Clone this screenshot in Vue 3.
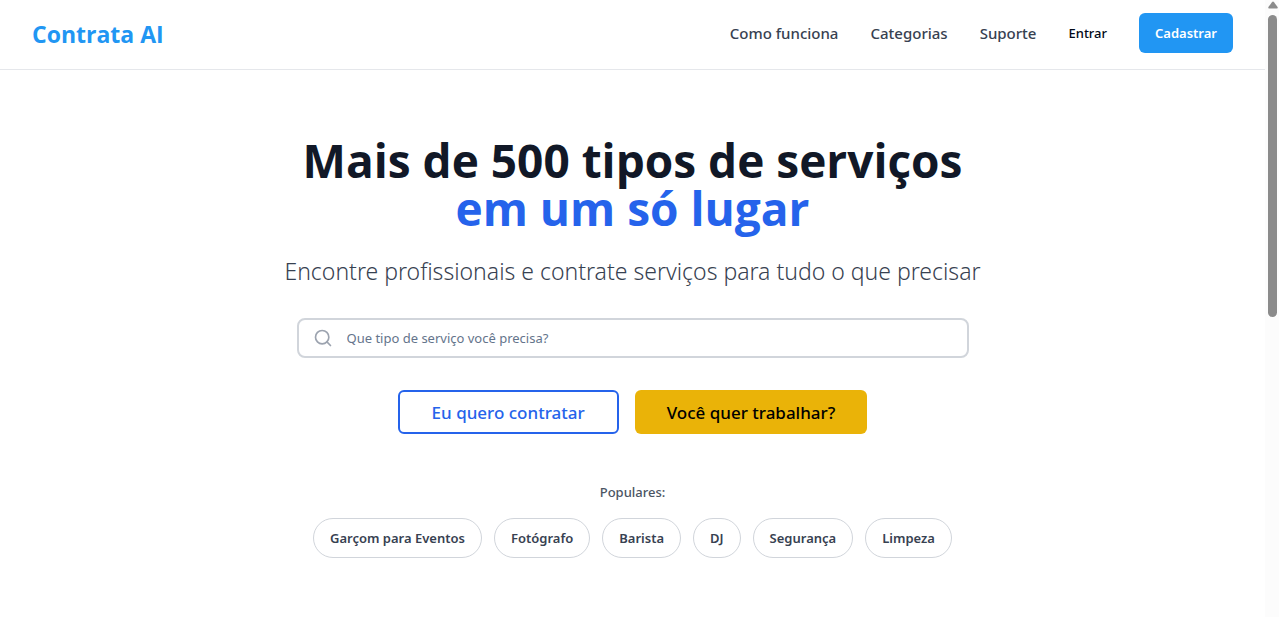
<script setup>
import { ref } from 'vue'

const query = ref('')
const links = ['Como funciona', 'Categorias', 'Suporte']
const popular = ['Garçom para Eventos', 'Fotógrafo', 'Barista', 'DJ', 'Segurança', 'Limpeza']
</script>

<template>
  <div class="shell">
    <div class="page">
      <header class="header">
        <a class="logo" href="#">Contrata AI</a>
        <nav class="nav">
          <a v-for="link in links" :key="link" class="nav-link" href="#">{{ link }}</a>
          <button class="login" type="button">Entrar</button>
          <button class="signup" type="button">Cadastrar</button>
        </nav>
      </header>

      <main class="hero">
        <h1 class="title">Mais de 500 tipos de serviços<span class="accent">em um só lugar</span></h1>
        <p class="subtitle">Encontre profissionais e contrate serviços para tudo o que precisar</p>

        <form class="search" role="search" @submit.prevent>
          <svg class="search-icon" viewBox="0 0 24 24" aria-hidden="true">
            <circle cx="11" cy="11" r="8" />
            <path d="m21 21-4.3-4.3" />
          </svg>
          <input v-model="query" class="search-input" type="text" aria-label="Que tipo de serviço você precisa?" placeholder="Que tipo de serviço você precisa?" />
        </form>

        <div class="actions">
          <button class="action hire" type="button">Eu quero contratar</button>
          <button class="action work" type="button">Você quer trabalhar?</button>
        </div>

        <p class="popular-label">Populares:</p>
        <div class="chips">
          <button v-for="item in popular" :key="item" class="chip" type="button">{{ item }}</button>
        </div>
      </main>
    </div>

    <div class="scrollbar" aria-hidden="true">
      <svg class="arrow" viewBox="0 0 10 8"><path d="M4 1.2Q5 0 6 1.2L9.6 6Q10 7.5 9 7.5H1Q0 7.5.4 6Z" /></svg>
      <div class="thumb"></div>
    </div>
  </div>
</template>

<style>
body {
  margin: 0;
  background: #fff;
}
</style>

<style scoped>
.shell {
  display: flex;
  height: 100vh;
  overflow: hidden;
  font-family: "Segoe UI", "Noto Sans", "Open Sans", sans-serif;
  color: #374151;
}
.shell * {
  box-sizing: border-box;
}
button,
input {
  font-family: inherit;
}
button {
  cursor: pointer;
  white-space: nowrap;
}
.page {
  flex: 1;
  min-width: 0;
}
.header {
  display: flex;
  align-items: center;
  justify-content: space-between;
  padding: 13px 32px 16px;
  border-bottom: 1px solid #e5e7eb;
}
.logo {
  padding-top: 2px;
  font-family: "Segoe UI", "Open Sans", sans-serif;
  font-size: 23px;
  line-height: 32px;
  font-weight: 700;
  color: #2196f3;
  text-decoration: none;
}
.nav {
  display: flex;
  align-items: center;
  gap: 32px;
}
.nav-link {
  font-size: 15px;
  line-height: 24px;
  font-weight: 500;
  color: #374151;
  text-decoration: none;
}
.login {
  padding: 0;
  border: 0;
  background: none;
  font-size: 13px;
  font-weight: 500;
  color: #020817;
}
.signup {
  height: 40px;
  padding: 0 16px;
  border: 0;
  border-radius: 6px;
  background: #2196f3;
  font-size: 13px;
  font-weight: 600;
  color: #fff;
}
.hero {
  display: flex;
  flex-direction: column;
  align-items: center;
  padding: 66px 16px 60px;
}
.title {
  display: flex;
  flex-direction: column;
  margin: 0 0 23px;
  font-family: "Segoe UI", "Open Sans", sans-serif;
  font-size: 46px;
  line-height: 48px;
  font-weight: 700;
  color: #111827;
  text-align: center;
}
.accent {
  color: #2563eb;
}
.subtitle {
  margin: 0 0 31px;
  font-size: 23px;
  line-height: 32px;
  font-weight: 300;
  color: #374151;
  text-align: center;
}
.search {
  display: flex;
  align-items: center;
  gap: 14px;
  width: 100%;
  max-width: 672px;
  height: 40px;
  margin-bottom: 32px;
  padding: 0 14px;
  border: 2px solid #d1d5db;
  border-radius: 8px;
}
.search-icon {
  flex: none;
  width: 20px;
  height: 20px;
  fill: none;
  stroke: #9ca3af;
  stroke-width: 2;
  stroke-linecap: round;
}
.search-input {
  flex: 1;
  min-width: 0;
  padding: 0;
  border: 0;
  outline: 0;
  background: none;
  font-size: 13px;
  line-height: 20px;
  color: #111827;
}
.search-input::placeholder {
  color: #64748b;
  opacity: 1;
}
.actions {
  display: flex;
  gap: 16px;
  margin-bottom: 48px;
}
.action {
  height: 44px;
  padding: 0 32px;
  border: 0;
  border-radius: 6px;
  font-size: 17px;
  font-weight: 500;
}
.hire {
  border: 2px solid #2563eb;
  background: #fff;
  color: #2563eb;
}
.work {
  background: #eab308;
  color: #000;
}
.popular-label {
  margin: 0 0 16px;
  font-size: 13px;
  line-height: 20px;
  font-weight: 500;
  color: #4b5563;
}
.chips {
  display: flex;
  flex-wrap: wrap;
  justify-content: center;
  gap: 12px;
}
.chip {
  height: 40px;
  padding: 0 16px;
  border: 1px solid #d1d5db;
  border-radius: 20px;
  background: #fff;
  font-size: 13px;
  font-weight: 600;
  color: #374151;
}
.scrollbar {
  flex: none;
  display: flex;
  flex-direction: column;
  align-items: center;
  gap: 6px;
  width: 14px;
  padding: 1px 1px 0 2px;
  background: #fcfcfc;
}
.arrow {
  width: 10px;
  height: 8px;
  fill: #8b8b8b;
}
.thumb {
  width: 9px;
  height: 49%;
  border-radius: 5px;
  background: #8b8b8b;
}
</style>
